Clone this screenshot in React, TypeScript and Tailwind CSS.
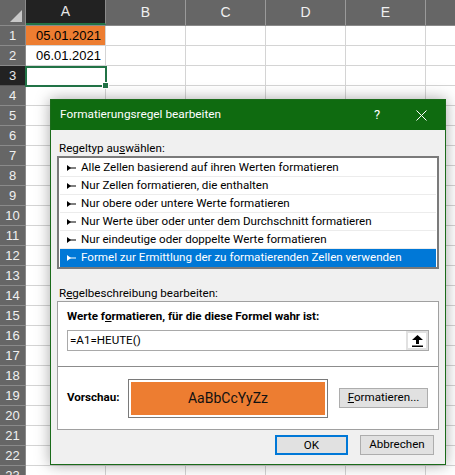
import React from "react";

const cols = ["A", "B", "C", "D", "E"];
const rows = Array.from({ length: 23 }, (_, i) => i + 1);

const ruleTypes = [
  "Alle Zellen basierend auf ihren Werten formatieren",
  "Nur Zellen formatieren, die enthalten",
  "Nur obere oder untere Werte formatieren",
  "Nur Werte über oder unter dem Durchschnitt formatieren",
  "Nur eindeutige oder doppelte Werte formatieren",
  "Formel zur Ermittlung der zu formatierenden Zellen verwenden",
];

function RuleArrow({ white }: { white?: boolean }) {
  const c = white ? "#ffffff" : "#000000";
  return (
    <svg width="9" height="6" viewBox="0 0 9 6" className="shrink-0">
      <polygon points="0,0 4,3 0,6" fill={c} />
      <rect x="3" y="2.5" width="6" height="1" fill={c} />
    </svg>
  );
}

function UploadIcon() {
  return (
    <svg width="11" height="12" viewBox="0 0 11 12">
      <polygon points="5.5,0 11,5 7,5 7,9 4,9 4,5 0,5" fill="#000" />
      <rect x="0" y="10.5" width="11" height="1.5" fill="#000" />
    </svg>
  );
}

function Sheet() {
  return (
    <div className="font-['Liberation_Sans',sans-serif]">
      <div className="flex h-[26px] bg-[#666666] border-b border-[#8a8a8a]">
        <div className="relative w-[26px] shrink-0 border-r border-[#8a8a8a]">
          <svg width="12" height="12" className="absolute right-[3px] bottom-[3px]">
            <polygon points="12,0 12,12 0,12" fill="#c8c8c8" />
          </svg>
        </div>
        {cols.map((c) => (
          <div
            key={c}
            className={
              c === "A"
                ? "w-[80px] shrink-0 flex items-center justify-center bg-[#222222] text-[#e8e8e8] text-[14px] border-b-2 border-[#217346] border-r border-r-[#8a8a8a]"
                : "w-[80px] shrink-0 flex items-center justify-center text-[#f0f0f0] text-[14px] border-r border-[#9a9a9a]"
            }
          >
            {c}
          </div>
        ))}
        <div className="flex-1" />
      </div>
      {rows.map((r) => (
        <div key={r} className="flex h-[20px]">
          <div
            className={
              r === 3
                ? "w-[26px] shrink-0 flex items-center justify-center bg-[#222222] text-[#e8e8e8] text-[13px] border-r border-[#8a8a8a] border-b border-b-[#555]"
                : "w-[26px] shrink-0 flex items-center justify-center bg-[#666666] text-[#f0f0f0] text-[13px] border-r border-[#8a8a8a] border-b border-b-[#8a8a8a]"
            }
          >
            {r}
          </div>
          {cols.map((c) => (
            <div
              key={c}
              className={
                "w-[80px] shrink-0 border-r border-b border-[#d4d4d4] flex items-center justify-end pr-[4px] text-[13px] text-black " +
                (c === "A" && r === 1 ? "bg-[#ed7d31]" : "bg-white")
              }
            >
              {c === "A" && r === 1 ? "05.01.2021" : c === "A" && r === 2 ? "06.01.2021" : ""}
            </div>
          ))}
          <div className="flex-1 border-b border-[#d4d4d4]" />
        </div>
      ))}
    </div>
  );
}

function Dialog() {
  return (
    <div className="absolute left-[50px] top-[99px] w-[396px] h-[366px] bg-[#f0f0f0] border border-[#1a6b1a] shadow-[0_0_14px_rgba(0,0,0,0.35)] flex flex-col text-[11.6px] text-black font-['Roboto',sans-serif]">
      <div className="h-[30px] shrink-0 bg-[#0f6b10] flex items-center pl-[9px] text-white text-[11.8px]">
        <span className="flex-1">Formatierungsregel bearbeiten</span>
        <span className="w-[20px] text-center mr-[29px] text-[13px]">?</span>
        <svg width="11" height="11" viewBox="0 0 11 11" className="mr-[18px]">
          <path d="M0.5 0.5 L10.5 10.5 M10.5 0.5 L0.5 10.5" stroke="#fff" strokeWidth="1" />
        </svg>
      </div>
      <div className="flex flex-col px-[6px]">
        <div className="h-[16px] mt-[10px] pl-[2px] leading-[16px]">
          Regeltyp au<span className="underline">s</span>wählen:
        </div>
        <div className="h-[113px] bg-white border-2 border-[#7a7a7a] p-[1px] flex flex-col">
          {ruleTypes.map((t, i) => {
            const sel = i === ruleTypes.length - 1;
            return (
              <div
                key={t}
                className={
                  sel
                    ? "h-[18px] shrink-0 flex items-center gap-[5px] pl-[7px] bg-[#0078d7] text-white"
                    : "h-[18px] shrink-0 flex items-center gap-[5px] pl-[7px] border-b border-[#ececec]"
                }
              >
                <RuleArrow white={sel} />
                <span>{t}</span>
              </div>
            );
          })}
        </div>
        <div className="h-[16px] mt-[16px] pl-[2px] leading-[16px]">
          R<span className="underline">e</span>gelbeschreibung bearbeiten:
        </div>
        <div className="h-[129px] bg-white border border-[#a0a0a0] flex flex-col">
          <div className="px-[9px] pt-[6px]">
            <div className="h-[16px] leading-[16px] font-bold">
              Werte f<span className="underline">o</span>rmatieren, für die diese Formel wahr ist:
            </div>
            <div className="mt-[6px] h-[21px] flex border border-[#a9a9a9]">
              <div className="flex-1 flex items-center pl-[2px]">=A1=HEUTE()</div>
              <div className="w-[22px] bg-[#e1e1e1] p-[2px]">
                <div className="h-full bg-white flex items-center justify-center">
                  <UploadIcon />
                </div>
              </div>
            </div>
          </div>
          <div className="mt-[15px] border-t border-[#8c8c8c] flex-1 flex items-center pl-[9px] pr-[10px]">
            <span className="w-[61px] font-bold">Vorschau:</span>
            <div className="w-[200px] h-[39px] border border-[#7a7a7a] p-[2px] bg-white">
              <div className="h-full bg-[#ed7d31] flex items-center justify-center text-[14px] text-[#111]">
                AaBbCcYyZz
              </div>
            </div>
            <div className="flex-1" />
            <button className="w-[89px] h-[20px] bg-[#e1e1e1] border border-[#adadad]">
              <span className="underline">F</span>ormatieren...
            </button>
          </div>
        </div>
        <div className="mt-[5px] flex justify-end gap-[12px] pr-[5px]">
          <button className="w-[73px] h-[20px] bg-[#e1e1e1] border-2 border-[#0078d7]">OK</button>
          <button className="w-[74px] h-[20px] bg-[#e1e1e1] border border-[#adadad]">Abbrechen</button>
        </div>
      </div>
    </div>
  );
}

export default function App() {
  return (
    <div className="relative w-[455px] h-[475px] overflow-hidden bg-white">
      <Sheet />
      <div className="absolute left-[25px] top-[66px] w-[82px] h-[21px] border-2 border-[#217346]">
        <div className="absolute right-[-4px] bottom-[-4px] w-[5px] h-[5px] bg-[#217346] border border-white box-content" />
      </div>
      <Dialog />
    </div>
  );
}
